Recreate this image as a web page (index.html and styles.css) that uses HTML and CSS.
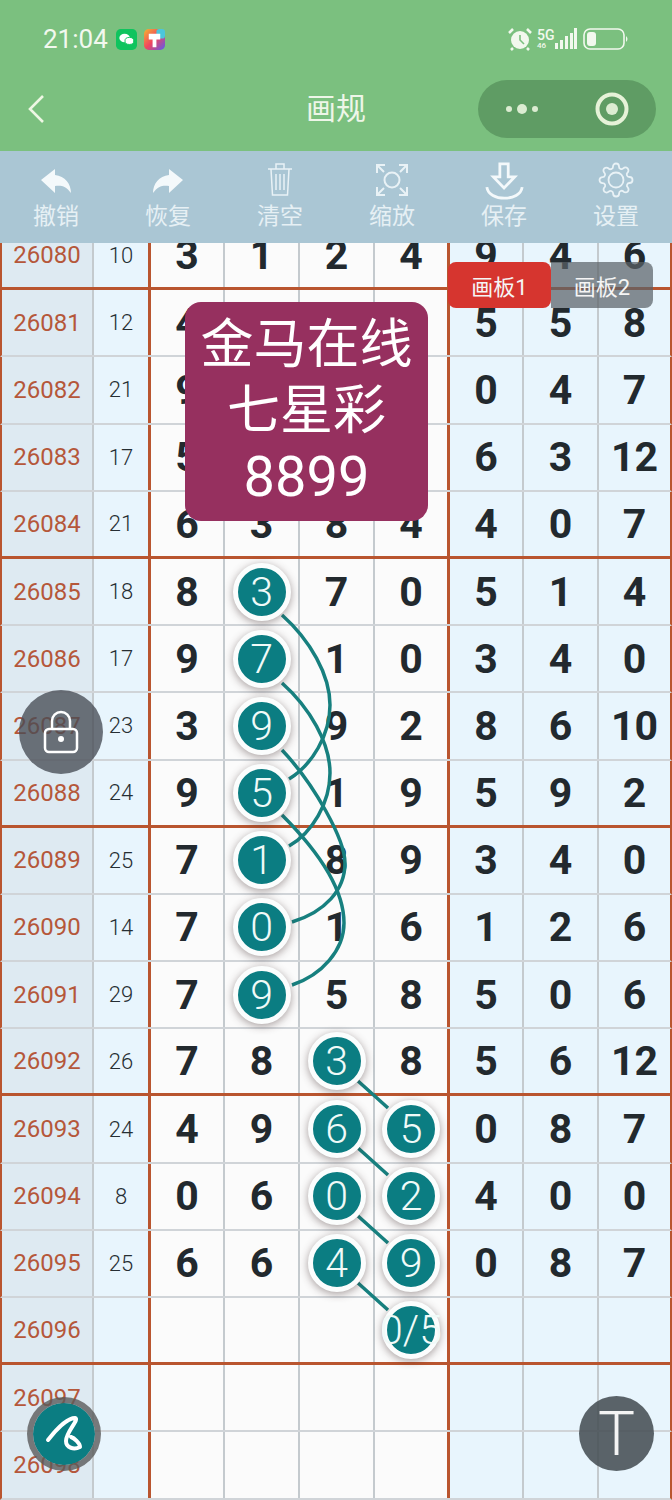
FILE: index.html
```html
<!doctype html>
<html>
  <head>
    <meta charset="utf-8">
    <title>画规</title>
    <link rel="stylesheet" href="styles.css">
  </head>
  <body>
    <header class="top">
      <div class="status">
        <span class="time">21:04</span>
        <svg class="app" viewBox="0 0 22 22"><rect width="22" height="22" rx="5" fill="#0fc45e"/><ellipse cx="9" cy="9.5" rx="5.5" ry="4.4" fill="#fff"/><ellipse cx="14" cy="12.5" rx="4.6" ry="3.7" fill="#fff" stroke="#0fc45e"/></svg>
        <svg class="app" viewBox="0 0 22 22">
          <defs><linearGradient id="rainbow" x1="0" y1="0" x2="1" y2="1"><stop offset="0" stop-color="#f6b52e"/><stop offset=".5" stop-color="#f0455f"/><stop offset="1" stop-color="#5a5cf0"/></linearGradient></defs>
          <rect width="22" height="22" rx="5" fill="url(#rainbow)"/><rect x="13" width="9" height="10" rx="3" fill="#4cc6dc"/><path d="M5 5h12v6H13v8H9v-8H5z" fill="#fff"/>
        </svg>
        <span class="grow"></span>
        <svg class="alarm" viewBox="0 0 24 24"><circle cx="12" cy="13" r="9" fill="#f2f8ee"/><path d="M12 8v5l4 4" fill="none" stroke="#7bc07f" stroke-width="1.6"/><path d="M1 6l4-4M23 6l-4-4M5 21l-2 2M19 21l2 2" stroke="#f2f8ee" stroke-width="2.500"/></svg>
        <span class="net"><span>5G</span><span class="tiny">46</span></span>
        <svg class="signal" viewBox="0 0 22 22"><g fill="#f2f8ee"><rect x="0" y="15" width="3" height="6"/><rect x="5" y="12" width="3" height="9"/><rect x="10" y="8" width="3" height="13"/><rect x="15" y="5" width="3" height="16"/><rect x="19" y="0" width="3" height="21"/></g></svg>
        <svg class="battery" viewBox="0 0 46 22"><rect x="1" y="1" width="40" height="20" rx="6" fill="none" stroke="#f2f8ee" stroke-width="1.600"/><rect x="4" y="4" width="9" height="14" rx="3" fill="#f2f8ee"/><path d="M43 8q3 3 0 6z" fill="#f2f8ee"/></svg>
      </div>
      <nav class="nav">
        <svg class="back" viewBox="0 0 20 30"><path d="M17 2L4 15l13 13" fill="none" stroke="#eef7e4" stroke-width="2.600"/></svg>
        <h1 class="title">画规</h1>
        <div class="capsule">
          <svg class="dots" viewBox="0 0 36 12"><circle cx="5" cy="6" r="3" fill="#dcecd2"/><circle cx="18" cy="6" r="5" fill="#dcecd2"/><circle cx="31" cy="6" r="3" fill="#dcecd2"/></svg>
          <svg class="target" viewBox="0 0 34 34"><circle cx="17" cy="17" r="14.500" fill="none" stroke="#e6f2d8" stroke-width="4"/><circle cx="17" cy="17" r="6" fill="#dcecd2"/></svg>
        </div>
      </nav>
    </header>

    <div class="tools">
      <div class="tool">
        <svg viewBox="-2 -3 36 36"><path d="M1 15L15 4v6c10 1 16 9 16 18-5-7-10-8-16-7v7z" fill="#f4f9fb"/></svg>
        <span>撤销</span>
      </div>
      <div class="tool">
        <svg viewBox="-2 -3 36 36"><path d="M31 15L17 4v6C7 11 1 19 1 28c5-7 10-8 16-7v7z" fill="#f4f9fb"/></svg>
        <span>恢复</span>
      </div>
      <div class="tool">
        <svg viewBox="0 0 32 36" class="line slim"><path d="M4 7h24M12 7V2h8v5M7 7l1.500 26h15L25 7M12 12v16M16 12v16M20 12v16"/></svg>
        <span>清空</span>
      </div>
      <div class="tool">
        <svg viewBox="0 0 36 36" class="line"><circle cx="18" cy="18" r="7.500"/><path d="M3 11V3h8M3 3l7 7M33 11V3h-8M33 3l-7 7M3 25v8h8M3 33l7-7M33 25v8h-8M33 33l-7-7"/></svg>
        <span>缩放</span>
      </div>
      <div class="tool">
        <svg viewBox="0 0 42 42" class="line bold"><path d="M16 2h9v14h7L20.500 28 9 16h7zM2 27c2 16 36 16 38 0"/></svg>
        <span>保存</span>
      </div>
      <div class="tool">
        <svg viewBox="0 0 24 24" class="line thin"><circle cx="12" cy="12" r="5"/><path d="M19.4 15a1.65 1.65 0 0 0 .33 1.82l.06.06a2 2 0 0 1 0 2.83 2 2 0 0 1-2.83 0l-.06-.06a1.65 1.65 0 0 0-1.82-.33 1.65 1.65 0 0 0-1 1.51V21a2 2 0 0 1-2 2 2 2 0 0 1-2-2v-.09A1.65 1.65 0 0 0 9 19.4a1.65 1.65 0 0 0-1.82.33l-.06.06a2 2 0 0 1-2.83 0 2 2 0 0 1 0-2.83l.06-.06a1.65 1.65 0 0 0 .33-1.82 1.65 1.65 0 0 0-1.51-1H3a2 2 0 0 1-2-2 2 2 0 0 1 2-2h.09A1.65 1.65 0 0 0 4.6 9a1.65 1.65 0 0 0-.33-1.82l-.06-.06a2 2 0 0 1 0-2.83 2 2 0 0 1 2.83 0l.06.06a1.65 1.65 0 0 0 1.82.33H9a1.65 1.65 0 0 0 1-1.51V3a2 2 0 0 1 2-2 2 2 0 0 1 2 2v.09a1.65 1.65 0 0 0 1 1.51 1.65 1.65 0 0 0 1.82-.33l.06-.06a2 2 0 0 1 2.83 0 2 2 0 0 1 0 2.83l-.06.06a1.65 1.65 0 0 0-.33 1.82V9a1.65 1.65 0 0 0 1.51 1H21a2 2 0 0 1 2 2 2 2 0 0 1-2 2h-.09a1.65 1.65 0 0 0-1.51 1z"/></svg>
        <span>设置</span>
      </div>
    </div>

    <main class="board">
      <div class="rows">
        <div class="row end"><i>26080</i><u>10</u><b>3</b><b>1</b><b>2</b><b>4</b><b>9</b><b>4</b><b>6</b></div>
        <div class="row"><i>26081</i><u>12</u><b>4</b><b>2</b><b>3</b><b>3</b><b>5</b><b>5</b><b>8</b></div>
        <div class="row"><i>26082</i><u>21</u><b>9</b><b>5</b><b>3</b><b>4</b><b>0</b><b>4</b><b>7</b></div>
        <div class="row"><i>26083</i><u>17</u><b>5</b><b>4</b><b>2</b><b>6</b><b>6</b><b>3</b><b>12</b></div>
        <div class="row end"><i>26084</i><u>21</u><b>6</b><b>3</b><b>8</b><b>4</b><b>4</b><b>0</b><b>7</b></div>
        <div class="row"><i>26085</i><u>18</u><b>8</b><b><em>3</em></b><b>7</b><b>0</b><b>5</b><b>1</b><b>4</b></div>
        <div class="row"><i>26086</i><u>17</u><b>9</b><b><em>7</em></b><b>1</b><b>0</b><b>3</b><b>4</b><b>0</b></div>
        <div class="row"><i>26087</i><u>23</u><b>3</b><b><em>9</em></b><b>9</b><b>2</b><b>8</b><b>6</b><b>10</b></div>
        <div class="row end"><i>26088</i><u>24</u><b>9</b><b><em>5</em></b><b>1</b><b>9</b><b>5</b><b>9</b><b>2</b></div>
        <div class="row"><i>26089</i><u>25</u><b>7</b><b><em>1</em></b><b>8</b><b>9</b><b>3</b><b>4</b><b>0</b></div>
        <div class="row"><i>26090</i><u>14</u><b>7</b><b><em>0</em></b><b>1</b><b>6</b><b>1</b><b>2</b><b>6</b></div>
        <div class="row"><i>26091</i><u>29</u><b>7</b><b><em>9</em></b><b>5</b><b>8</b><b>5</b><b>0</b><b>6</b></div>
        <div class="row end"><i>26092</i><u>26</u><b>7</b><b>8</b><b><em>3</em></b><b>8</b><b>5</b><b>6</b><b>12</b></div>
        <div class="row"><i>26093</i><u>24</u><b>4</b><b>9</b><b><em>6</em></b><b><em>5</em></b><b>0</b><b>8</b><b>7</b></div>
        <div class="row"><i>26094</i><u>8</u><b>0</b><b>6</b><b><em>0</em></b><b><em>2</em></b><b>4</b><b>0</b><b>0</b></div>
        <div class="row"><i>26095</i><u>25</u><b>6</b><b>6</b><b><em>4</em></b><b><em>9</em></b><b>0</b><b>8</b><b>7</b></div>
        <div class="row end"><i>26096</i><u></u><b></b><b></b><b></b><b><em>0/5</em></b><b></b><b></b><b></b></div>
        <div class="row"><i>26097</i><u></u><b></b><b></b><b></b><b></b><b></b><b></b><b></b></div>
        <div class="row"><i>26098</i><u></u><b></b><b></b><b></b><b></b><b></b><b></b><b></b></div>
      </div>
    </main>

    <!-- links between picked balls, page coordinates -->
    <svg class="links" viewBox="0 0 672 1500">
      <path d="M282 615C310 640 330 675 330 705C330 735 312 765 289 779"/>
      <path d="M282 683C310 708 330 743 330 773C330 803 312 833 289 846"/>
      <path d="M282 750C315 785 345 840 345 863C345 890 325 912 292 922"/>
      <path d="M282 815C312 845 344 885 344 923C344 950 322 975 292 985"/>
      <path d="M358 1081L388 1108M358 1148L388 1175M358 1216L388 1243M358 1283L388 1310"/>
    </svg>

    <div class="tab tab-on">画板1</div>
    <div class="tab tab-off">画板2</div>

    <div class="card">金马在线<br>七星彩<br><span class="card-no">8899</span></div>

    <div class="fab lock">
      <svg viewBox="0 0 36 46"><path d="M9 20V12a9 9 0 0 1 18 0v8" fill="none" stroke="#fff" stroke-width="2.500"/><rect x="2" y="20" width="32" height="23" rx="4" fill="none" stroke="#fff" stroke-width="2.500"/><circle cx="18" cy="30" r="3" fill="#fff"/></svg>
    </div>
    <div class="fab pen">
      <svg viewBox="40 1410 48 48"><path d="M48 1440C55 1431 67 1418 75 1418C80 1419 66 1432 66 1441C66 1448 74 1450 80 1447C80 1443 74 1438 71 1437" fill="none" stroke="#fff" stroke-width="4" stroke-linecap="round" stroke-linejoin="round"/></svg>
    </div>
    <div class="fab text">T</div>
  </body>
</html>
```

FILE: styles.css
```css
* {
  margin: 0;
  padding: 0;
  box-sizing: border-box;
}
html, body {
  overflow: hidden;
  height: 100%;
}
body {
  position: relative;
  display: flex;
  flex-direction: column;
  width: 672px;
  height: 1500px;
  background: #fff;
  font-family: Roboto, "Noto Sans CJK SC", sans-serif;
}
svg {
  display: block;
}

/* header */
.top {
  height: 151px;
  background: #7bc07f;
  color: #f2f8ee;
}
.status {
  display: flex;
  align-items: center;
  height: 78px;
  padding: 0 44px 0 43px;
}
.time {
  font-size: 26px;
  margin-right: 8px;
}
.app {
  width: 21px;
  height: 21px;
  margin-right: 7px;
}
.grow {
  flex: 1;
}
.alarm {
  width: 24px;
  height: 24px;
  margin-right: 5px;
}
.net {
  display: flex;
  flex-direction: column;
  font-size: 14px;
  line-height: 12px;
  font-weight: 500;
  width: 18px;
}
.net .tiny {
  font-size: 8px;
  line-height: 9px;
}
.signal {
  width: 22px;
  height: 22px;
  margin-right: 6px;
}
.battery {
  width: 46px;
  height: 22px;
  margin-right: -1px;
}
.nav {
  display: grid;
  grid-template-columns: 1fr auto 1fr;
  align-items: center;
  height: 62px;
  padding: 0 16px;
}
.back {
  width: 20px;
  height: 30px;
  margin-left: 10px;
}
.title {
  font-size: 30px;
  line-height: 58px;
  font-weight: 400;
  color: #eef6e8;
}
.capsule {
  justify-self: end;
  display: flex;
  align-items: center;
  justify-content: space-between;
  width: 178px;
  height: 58px;
  padding: 0 27px 0 26px;
  border-radius: 29px;
  background: #5f9c64;
}
.dots {
  width: 36px;
  height: 12px;
}
.target {
  width: 34px;
  height: 34px;
}

/* toolbar */
.tools {
  display: flex;
  height: 92px;
  background: #aac6d4;
}
.tool {
  flex: 1;
  display: flex;
  flex-direction: column;
  align-items: center;
  font-size: 23px;
  line-height: 30px;
  color: #e6f0f4;
}
.tool svg {
  width: 36px;
  height: 36px;
  margin-top: 11px;
}
.tool span {
  margin-top: 4px;
}
.line {
  fill: none;
  stroke: #e9f2f6;
  stroke-width: 2;
}
.line.slim {
  stroke-width: 1.5;
}
.line.bold {
  stroke: #f4f9fb;
  stroke-width: 3;
}
.tool svg.bold {
  width: 39px;
  height: 39px;
  margin: 11px 0 -3px;
}
.line.thin {
  stroke-width: 1.2;
}

/* table */
.board {
  flex: 1;
  overflow: hidden;
  min-height: 0;
}
.rows {
  margin-top: -20px;
}
.row {
  display: grid;
  grid-template-columns: 92px 57px 74px 75px 75px 75px 74px 75px 1fr;
  height: 67.2px;
  border-left: 2px solid #b9552f;
  border-right: 2px solid #b9552f;
  border-bottom: 2px solid #d0d4d8;
}
.row.end {
  border-bottom: 3px solid #b9552f;
}
.row i,
.row u,
.row b {
  display: flex;
  align-items: center;
  justify-content: center;
  text-decoration: none;
  font-style: normal;
  border-right: 2px solid #c4cace;
}
.row i {
  background: #deeaf2;
  color: #b5573a;
  font-size: 24px;
}
.row u {
  background: #e8f5fd;
  color: #262e33;
  font-size: 22px;
  font-weight: 300;
  border-right: 3px solid #b9552f;
}
.row b {
  background: #fbfbfb;
  color: #22292e;
  font-size: 41px;
  font-weight: 700;
}
.row b:nth-child(6) {
  border-right: 3px solid #b9552f;
}
.row b:nth-child(n+7) {
  background: #e8f5fd;
}
.row b:last-child {
  border-right: 0;
}
.row em {
  position: relative;
  z-index: 3;
  flex: none;
  display: flex;
  align-items: center;
  justify-content: center;
  width: 58px;
  height: 58px;
  border: 5px solid #fbfdfd;
  border-radius: 50%;
  background: #0b7d82;
  color: #f0faf8;
  font-size: 41px;
  font-weight: 300;
  font-style: normal;
  white-space: nowrap;
  box-shadow: 0 2px 8px rgba(60, 40, 40, .45);
}

/* overlays */
.links {
  position: absolute;
  top: 0;
  left: 0;
  width: 672px;
  height: 1500px;
  z-index: 2;
  fill: none;
  stroke: #17807f;
  stroke-width: 3.5;
}
.tab {
  position: absolute;
  z-index: 4;
  top: 262px;
  height: 46px;
  display: flex;
  align-items: center;
  justify-content: center;
  color: #f5f5f5;
  font-size: 22px;
}
.tab-on {
  left: 448px;
  width: 103px;
  background: #d6352f;
  border-radius: 8px;
}
.tab-off {
  left: 551px;
  width: 102px;
  background: rgba(90, 98, 104, .72);
  border-radius: 0 8px 8px 0;
}
.card {
  position: absolute;
  z-index: 4;
  left: 185px;
  top: 302px;
  width: 243px;
  height: 219px;
  padding-top: 10px;
  border-radius: 16px;
  background: #96305f;
  color: #fff;
  font-size: 53px;
  line-height: 66px;
  text-align: center;
}
.card-no {
  font-size: 56px;
}
.fab {
  position: absolute;
  z-index: 5;
  display: flex;
  align-items: center;
  justify-content: center;
  border-radius: 50%;
}
.lock {
  left: 19px;
  top: 690px;
  width: 84px;
  height: 84px;
  background: rgba(70, 75, 85, .78);
}
.lock svg {
  width: 36px;
  height: 46px;
}
.pen {
  left: 27px;
  top: 1397px;
  width: 74px;
  height: 74px;
  border: 6px solid rgba(90, 90, 90, .8);
  background: #0b7d82;
  background-clip: padding-box;
}
.pen svg {
  width: 48px;
  height: 48px;
}
.text {
  left: 579px;
  top: 1396px;
  width: 75px;
  height: 75px;
  background: rgba(70, 78, 84, .88);
  color: #f4f4f4;
  font-size: 62px;
  font-weight: 300;
  line-height: 1;
}
```
